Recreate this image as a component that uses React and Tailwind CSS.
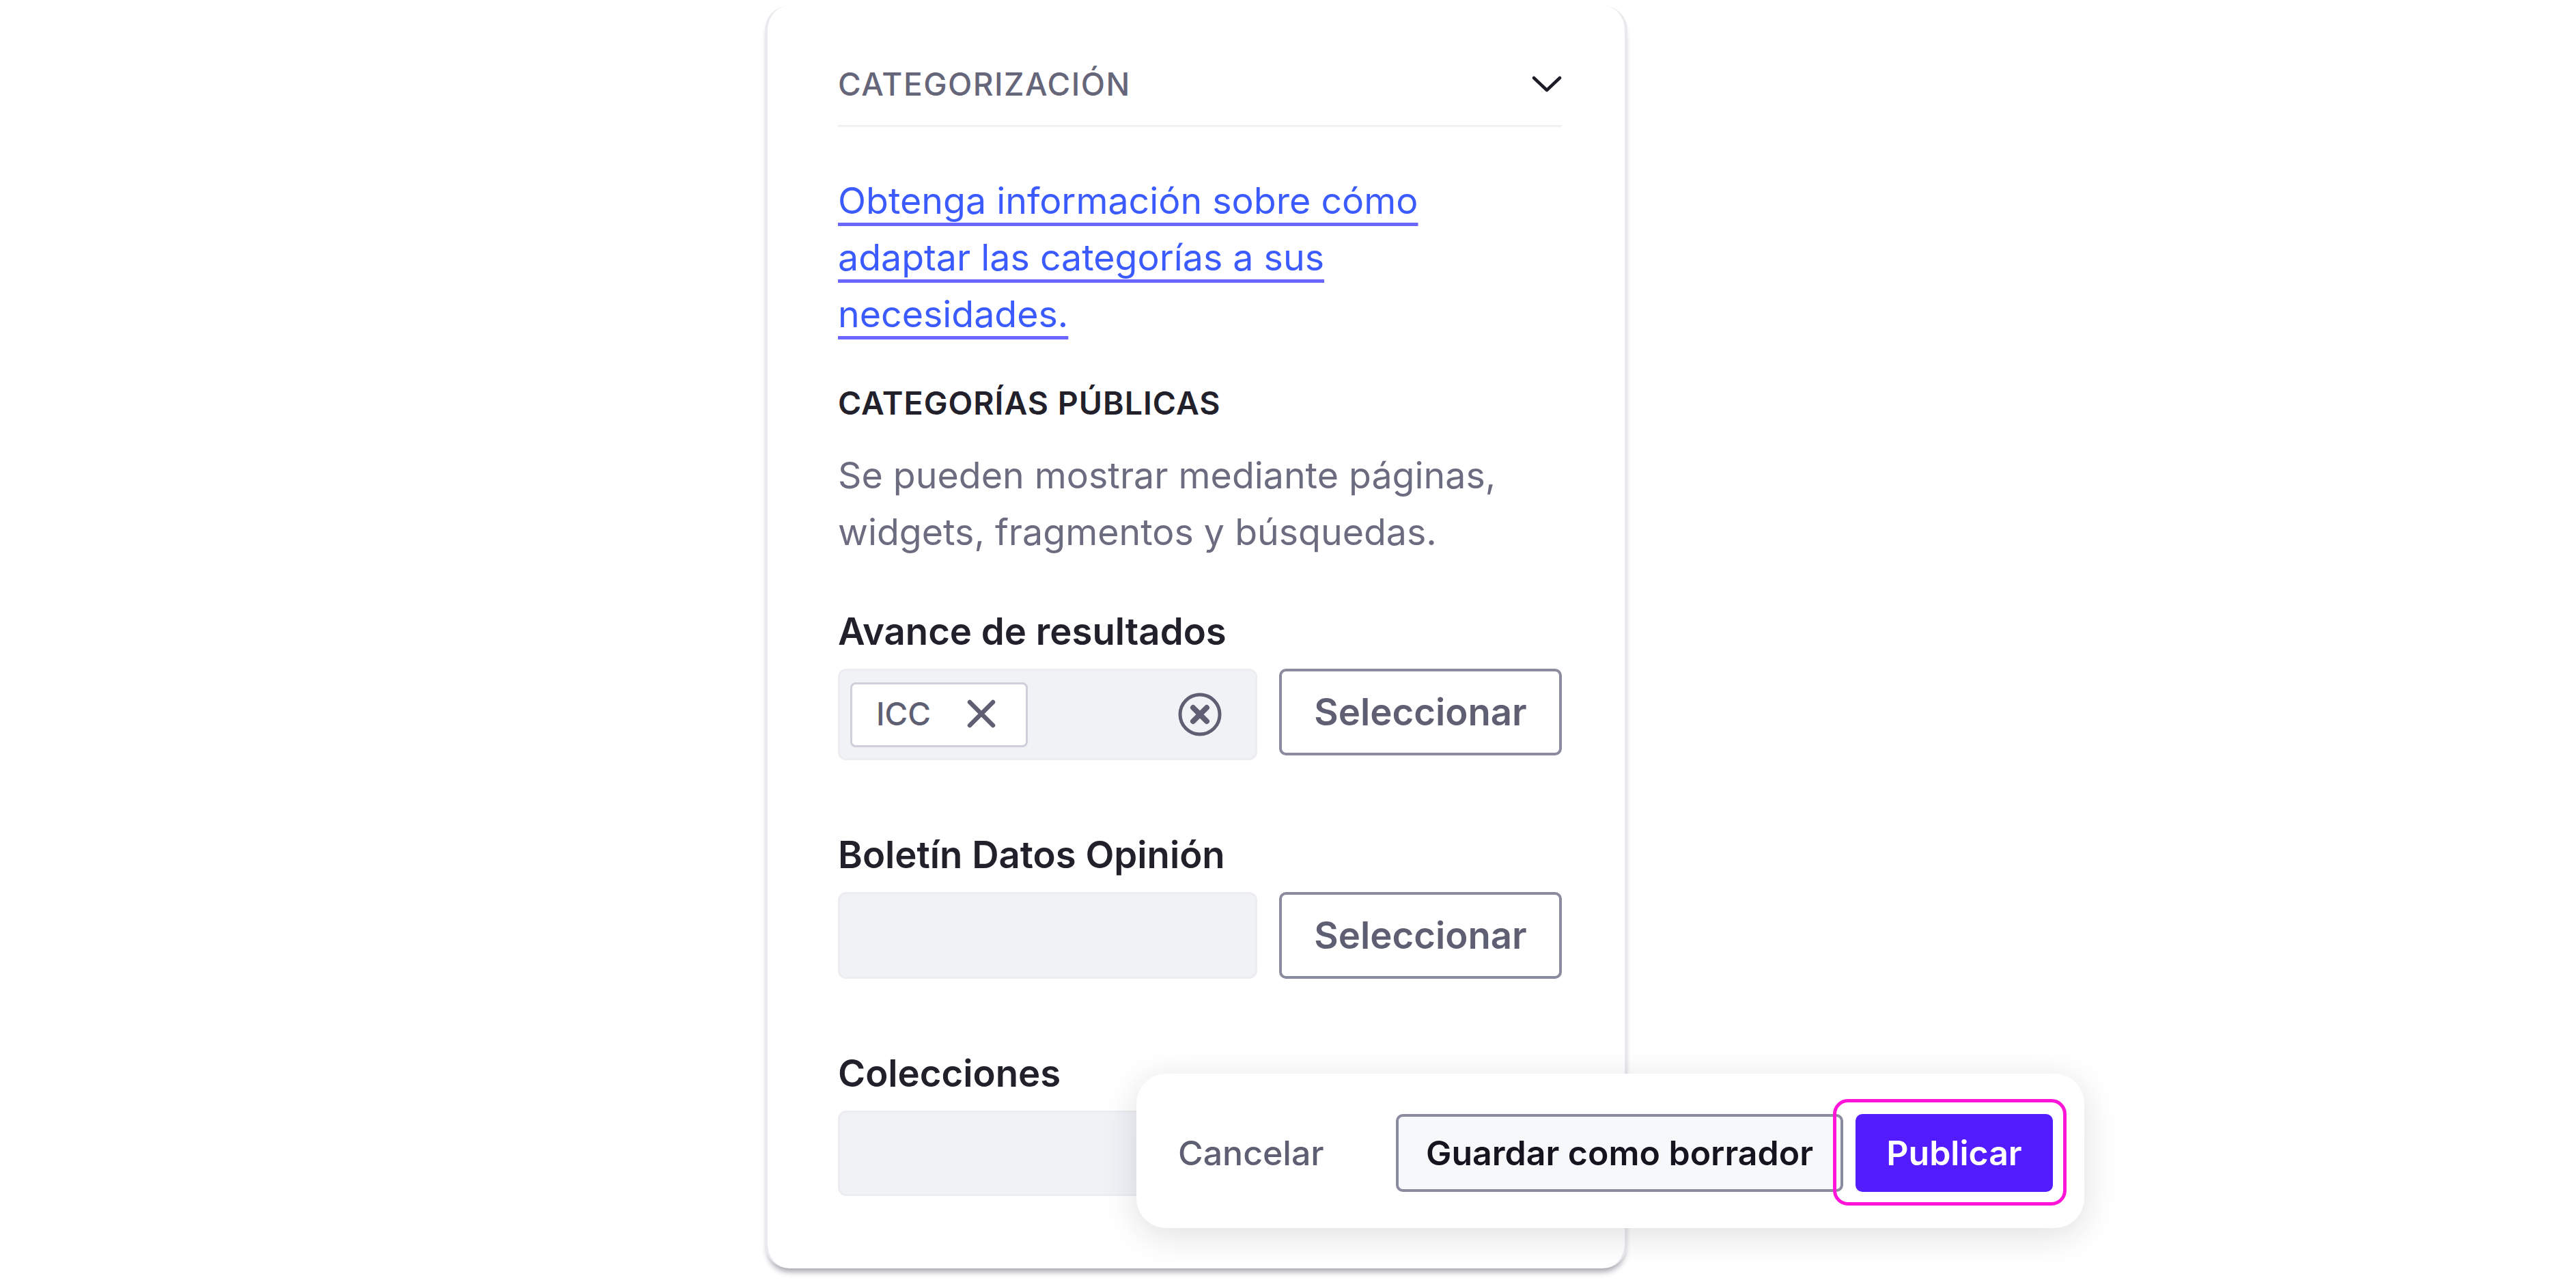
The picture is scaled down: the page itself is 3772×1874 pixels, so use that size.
import React from "react";

const SelectField = ({ label, children, inputHeight = "h-[127px]", labelGap = "mt-[105px]", showButton = true }) => (
  <div>
    <div className={`${labelGap} text-[54.5px] leading-[66px] font-semibold text-[#21202b]`}>{label}</div>
    <div className="mt-[22px] flex items-start gap-[32px]">
      <div className={`${inputHeight} w-[614px] shrink-0 rounded-[12px] border-[3px] border-[#ecedf1] bg-[#f1f2f6] flex items-center justify-between pl-[15px] pr-[48px]`}>
        {children}
      </div>
      {showButton && (
        <button className="h-[127px] w-[414px] rounded-[10px] border-[4px] border-[#8b8b9f] bg-white text-[54.5px] font-semibold text-[#5f5f73]">
          Seleccionar
        </button>
      )}
    </div>
  </div>
);

export default function App() {
  return (
    <div className="relative h-[1874px] w-[3772px] overflow-hidden bg-white font-['Inter',sans-serif]">
      {/* Panel */}
      <div className="ml-[1120px] mt-[8px] w-[1263px] rounded-[36px] border-x-[4px] border-x-[#e9e9ee] bg-white pb-[106px] pl-[103px] pr-[92px] pt-[55px] shadow-[0_9px_9px_-4px_rgba(30,30,50,0.4)]">
        <div className="flex h-[123px] items-center justify-between border-b-[3px] border-[#f1f1f4]">
          <span className="text-[46px] font-medium tracking-[1.5px] text-[#66667a]">CATEGORIZACIÓN</span>
          <svg width="44" height="24" viewBox="0 0 44 24" fill="none" stroke="#1c1b26" strokeWidth="4.5" strokeLinecap="round" strokeLinejoin="round">
            <path d="M3 3 L22 21 L41 3" />
          </svg>
        </div>

        <p className="mt-[66px] w-[1000px] text-[53.7px] leading-[83px] text-[#3b5bff]">
          <a className="underline decoration-[#6a66ff] decoration-[5px] underline-offset-[13px] [text-decoration-skip-ink:none]">
            Obtenga información sobre cómo adaptar las categorías a sus necesidades.
          </a>
        </p>

        <div className="mt-[61px] text-[46.5px] leading-[56px] font-semibold tracking-[1px] text-[#21202b]">CATEGORÍAS PÚBLICAS</div>
        <p className="mt-[36px] w-[1010px] text-[53.7px] leading-[83px] text-[#6c6c80]">
          Se pueden mostrar mediante páginas, widgets, fragmentos y búsquedas.
        </p>

        <SelectField label="Avance de resultados" inputHeight="h-[134px]" labelGap="mt-[71px]">
          <div className="flex h-[95px] w-[260px] items-center justify-between rounded-[8px] border-[3px] border-[#cfcfdc] bg-white pb-[2px] pl-[35px] pr-[44px]">
            <span className="text-[46px] font-medium text-[#5f5f73]">ICC</span>
            <svg width="42" height="42" viewBox="0 0 42 42" fill="none" stroke="#5f5f73" strokeWidth="6.5" strokeLinecap="round">
              <path d="M4 4 L38 38 M38 4 L4 38" />
            </svg>
          </div>
          <svg width="66" height="66" viewBox="0 0 66 66" fill="none" stroke="#5f5f73" strokeLinecap="round">
            <circle cx="33" cy="33" r="29" strokeWidth="5" />
            <path d="M23 23 L43 43 M43 23 L23 43" strokeWidth="8" />
          </svg>
        </SelectField>

        <SelectField label="Boletín Datos Opinión" />
        <SelectField label="Colecciones" inputHeight="h-[125px]" showButton={false} />
      </div>

      {/* Floating action bar */}
      <div className="absolute left-[1664px] top-[1572px] flex h-[226px] w-[1388px] items-center justify-between rounded-[44px] bg-white pl-[61px] pr-[46px] pt-[6px] shadow-[0_10px_50px_rgba(30,30,50,0.14)]">
        <span className="text-[50px] font-medium text-[#5f5f73]">Cancelar</span>
        <div className="flex items-center gap-[18px]">
          <button className="h-[114px] w-[655px] rounded-[10px] border-[4px] border-[#8b8b9f] bg-[#f7f8fa] text-[50px] font-semibold text-[#16151f]">
            Guardar como borrador
          </button>
          <div className="relative">
            <button className="h-[114px] w-[289px] rounded-[10px] bg-[#531cff] text-[50px] font-semibold text-white">
              Publicar
            </button>
            <div className="absolute -bottom-[20px] -left-[33px] -right-[20px] -top-[22px] rounded-[22px] border-[5px] border-[#ff14d8]" />
          </div>
        </div>
      </div>
    </div>
  );
}
